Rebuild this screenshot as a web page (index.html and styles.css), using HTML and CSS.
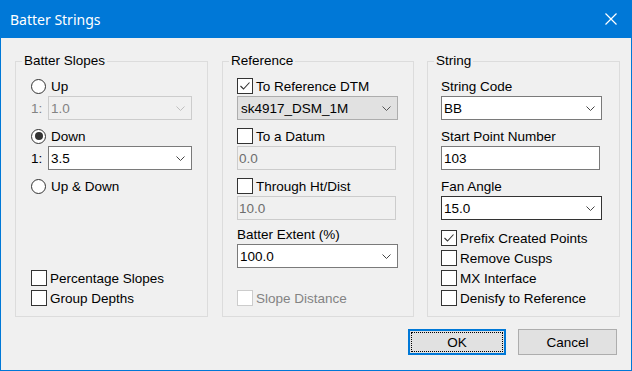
FILE: index.html
```html
<!DOCTYPE html>
<html>
<head>
<meta charset="utf-8">
<link rel="stylesheet" href="styles.css">
</head>
<body>
<div class="window">
  <div class="titlebar">
    <span class="title">Batter Strings</span>
    <svg class="close" width="12" height="12" viewBox="0 0 12 12"><path d="M0.5 0.5 L11.5 11.5 M11.5 0.5 L0.5 11.5" stroke="#fff" stroke-width="1.2" fill="none"/></svg>
  </div>
  <div class="content">
    <div class="groups">
      <fieldset class="group g1">
        <legend>Batter Slopes</legend>
        <div class="gbody">
          <div class="row"><span class="radio"></span><span class="rlabel">Up</span></div>
          <div class="field slope">
            <span class="prefix disabled-text">1:</span>
            <div class="combo disabled"><span class="val">1.0</span><svg class="chev" width="9" height="5" viewBox="0 0 9 5"><polyline points="0.5,0.5 4.5,4.5 8.5,0.5" fill="none" stroke="#bfbfbf"/></svg></div>
          </div>
          <div class="row gap8"><span class="radio on"></span><span class="rlabel">Down</span></div>
          <div class="field slope">
            <span class="prefix">1:</span>
            <div class="combo"><span class="val">3.5</span><svg class="chev" width="9" height="5" viewBox="0 0 9 5"><polyline points="0.5,0.5 4.5,4.5 8.5,0.5" fill="none" stroke="#444"/></svg></div>
          </div>
          <div class="row gap8"><span class="radio"></span><span class="rlabel">Up &amp; Down</span></div>
          <div class="row push"><span class="check"></span><span class="clabel">Percentage Slopes</span></div>
          <div class="row gap4"><span class="check"></span><span class="clabel">Group Depths</span></div>
        </div>
      </fieldset>
      <fieldset class="group g2">
        <legend>Reference</legend>
        <div class="gbody">
          <div class="row"><span class="check"><svg width="14" height="14" viewBox="0 0 14 14"><polyline points="2.5,7 5.5,10 11.5,3.5" fill="none" stroke="#333" stroke-width="1.1"/></svg></span><span class="clabel">To Reference DTM</span></div>
          <div class="field">
            <div class="combo list"><span class="val">sk4917_DSM_1M</span><svg class="chev" width="9" height="5" viewBox="0 0 9 5"><polyline points="0.5,0.5 4.5,4.5 8.5,0.5" fill="none" stroke="#555"/></svg></div>
          </div>
          <div class="row gap8"><span class="check"></span><span class="clabel">To a Datum</span></div>
          <div class="field"><div class="edit disabled"><span class="val">0.0</span></div></div>
          <div class="row gap8"><span class="check"></span><span class="clabel">Through Ht/Dist</span></div>
          <div class="field"><div class="edit disabled"><span class="val">10.0</span></div></div>
          <div class="row gap6"><span class="label">Batter Extent (%)</span></div>
          <div class="field">
            <div class="combo"><span class="val">100.0</span><svg class="chev" width="9" height="5" viewBox="0 0 9 5"><polyline points="0.5,0.5 4.5,4.5 8.5,0.5" fill="none" stroke="#444"/></svg></div>
          </div>
          <div class="row push"><span class="check disabled"></span><span class="clabel disabled-text">Slope Distance</span></div>
        </div>
      </fieldset>
      <fieldset class="group g3">
        <legend>String</legend>
        <div class="gbody">
          <div class="row"><span class="label">String Code</span></div>
          <div class="field">
            <div class="combo"><span class="val">BB</span><svg class="chev" width="9" height="5" viewBox="0 0 9 5"><polyline points="0.5,0.5 4.5,4.5 8.5,0.5" fill="none" stroke="#444"/></svg></div>
          </div>
          <div class="row gap8"><span class="label">Start Point Number</span></div>
          <div class="field"><div class="edit"><span class="val">103</span></div></div>
          <div class="row gap8"><span class="label">Fan Angle</span></div>
          <div class="field">
            <div class="combo dark"><span class="val">15.0</span><svg class="chev" width="9" height="5" viewBox="0 0 9 5"><polyline points="0.5,0.5 4.5,4.5 8.5,0.5" fill="none" stroke="#444"/></svg></div>
          </div>
          <div class="row gap10"><span class="check"><svg width="14" height="14" viewBox="0 0 14 14"><polyline points="2.5,7 5.5,10 11.5,3.5" fill="none" stroke="#333" stroke-width="1.1"/></svg></span><span class="clabel">Prefix Created Points</span></div>
          <div class="row gap4"><span class="check"></span><span class="clabel">Remove Cusps</span></div>
          <div class="row gap4"><span class="check"></span><span class="clabel">MX Interface</span></div>
          <div class="row gap4"><span class="check"></span><span class="clabel">Denisfy to Reference</span></div>
        </div>
      </fieldset>
    </div>
    <div class="buttons">
      <button class="btn default"><span class="focus">OK</span></button>
      <button class="btn">Cancel</button>
    </div>
  </div>
</div>
</body>
</html>
```
FILE: styles.css
```css
* { box-sizing: border-box; }
body {
  margin: 0;
  font-family: "Liberation Sans", Arial, sans-serif;
  font-size: 13.5px;
  color: #000;
  background: #f0f0f0;
}
.window {
  width: 632px;
  height: 371px;
  border: 1px solid #0078d7;
  border-top: 0;
  background: #f0f0f0;
  display: flex;
  flex-direction: column;
}
.titlebar {
  height: 38px;
  flex: none;
  background: #0078d7;
  color: #fff;
  display: flex;
  align-items: center;
  justify-content: space-between;
  padding: 0 14px 0 9px;
}
.title {
  font-family: "Noto Sans", "Open Sans", sans-serif;
  font-size: 14px;
  padding-top: 1px;
}
.close { display: block; }
.content {
  padding: 15px 0 0 14px;
}
.groups {
  display: flex;
}
.group {
  margin: 0;
  padding: 0;
  border: 1px solid #dcdcdc;
  height: 264px;
  min-width: 0;
  display: flex;
  flex-direction: column;
}
.group legend {
  margin-left: 6px;
  padding: 0 2px;
  line-height: 16px;
}
.g1 { width: 193px; }
.g2 { width: 192px; margin-left: 14px; }
.g3 { width: 193px; margin-left: 13px; }
.gbody {
  flex: 1;
  display: flex;
  flex-direction: column;
  padding: 9px 0 10px 15px;
}
.g2 .gbody { padding-left: 14px; }
.g3 .gbody { padding-left: 13px; }
.row {
  height: 16px;
  display: flex;
  align-items: center;
  white-space: nowrap;
}
.gap4 { margin-top: 4px; }
.gap6 { margin-top: 6px; }
.gap8 { margin-top: 8px; }
.gap10 { margin-top: 10px; }
.push { margin-top: auto; }
.field {
  height: 24px;
  margin-top: 2px;
  display: flex;
  align-items: stretch;
}
.radio {
  width: 15px;
  height: 15px;
  border: 1px solid #333;
  border-radius: 50%;
  background: #fff;
  display: flex;
  align-items: center;
  justify-content: center;
  flex: none;
}
.radio.on::after {
  content: "";
  width: 8px;
  height: 8px;
  border-radius: 50%;
  background: #333;
}
.rlabel { margin-left: 5px; }
.check {
  width: 16px;
  height: 16px;
  border: 1px solid #333;
  background: #fff;
  flex: none;
  display: flex;
  align-items: center;
  justify-content: center;
}
.check svg { display: block; }
.check.disabled { border-color: #cccccc; }
.clabel { margin-left: 3px; }
.disabled-text { color: #838383; }
.prefix {
  width: 17px;
  display: flex;
  align-items: center;
}
.combo, .edit {
  width: 161px;
  border: 1px solid #7a7a7a;
  background: #fff;
  display: flex;
  align-items: center;
  padding-left: 2px;
}
.edit { width: 159px; }
.slope .combo { width: 144px; }
.combo .val, .edit .val { flex: 1; }
.chev { margin-right: 6px; display: block; }
.combo.disabled {
  border-color: #cccccc;
  background: #f0f0f0;
  color: #838383;
}
.combo.list {
  border-color: #adadad;
  background: #e1e1e1;
  padding-left: 3px;
}
.combo.dark { border-color: #333; }
.edit.disabled {
  border-color: #cccccc;
  background: #f0f0f0;
  color: #6d6d6d;
  padding-left: 1px;
}
.buttons {
  display: flex;
  justify-content: flex-end;
  gap: 12px;
  margin-top: 12px;
  padding-right: 14px;
}
.btn {
  width: 98px;
  height: 26px;
  margin: 0;
  padding: 0;
  font-family: inherit;
  font-size: 13.5px;
  color: #000;
  background: #e1e1e1;
  border: 1px solid #adadad;
  display: flex;
  align-items: center;
  justify-content: center;
}
.btn + .btn { width: 99px; }
.btn.default {
  border: 2px solid #0078d7;
  padding: 1px;
}
.btn .focus {
  flex: 1;
  align-self: stretch;
  border: 1px dotted #000;
  display: flex;
  align-items: center;
  justify-content: center;
}
```
